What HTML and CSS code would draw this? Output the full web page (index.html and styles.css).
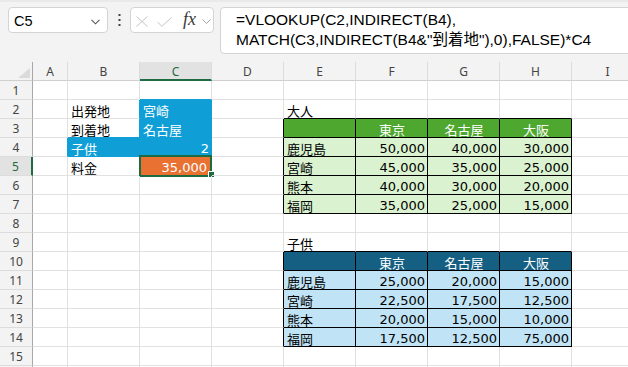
FILE: index.html
```html
<!DOCTYPE html>
<html lang="ja">

<head>
    <meta charset="UTF-8">
    <title>料金表</title>
    <link rel="stylesheet" href="styles.css">
</head>

<body>

    <div class="toolbar">
        <div class="name-box">
            <span>C5</span>
            <svg width="9" height="6" viewBox="0 0 9 6"><polyline points="0.5,0.8 4.5,4.8 8.5,0.8" fill="none" stroke="#555" stroke-width="1.1"/></svg>
        </div>
        <div class="dots">
            <svg width="3" height="13" viewBox="0 0 3 13"><rect x="0.5" y="0" width="2" height="2" fill="#444"/><rect x="0.5" y="5" width="2" height="2" fill="#444"/><rect x="0.5" y="10" width="2" height="2" fill="#444"/></svg>
        </div>
        <div class="fx-btns">
            <svg class="ico-x" width="12" height="11" viewBox="0 0 12 11"><path d="M0.5 0.5 L11.5 10.5 M11.5 0.5 L0.5 10.5" stroke="#c4c4c4" fill="none"/></svg>
            <svg class="ico-ok" width="15" height="10" viewBox="0 0 15 10"><polyline points="0.5,5 4.8,9.3 14.5,0.5" stroke="#c4c4c4" fill="none"/></svg>
            <span class="fx">fx</span>
            <svg class="ico-down" width="9" height="5" viewBox="0 0 9 5"><polyline points="0.5,0.5 4.5,4.5 8.5,0.5" stroke="#a2a2a2" fill="none"/></svg>
        </div>
        <div class="formula">=VLOOKUP(C2,INDIRECT(B4),<br>MATCH(C3,INDIRECT(B4&amp;"到着地"),0),FALSE)*C4</div>
    </div>

    <div class="sheet">
        <!-- column headers -->
        <div class="corner"><svg width="12" height="10" viewBox="0 0 12 10"><polygon points="12,0 12,10 0,10" fill="#dadada"/></svg></div>
        <div class="ch">A</div>
        <div class="ch">B</div>
        <div class="ch ch-sel">C</div>
        <div class="ch">D</div>
        <div class="ch">E</div>
        <div class="ch">F</div>
        <div class="ch">G</div>
        <div class="ch">H</div>
        <div class="ch">I</div>

        <!-- 1 -->
        <div class="rh">1</div>
        <div class="c"></div><div class="c"></div><div class="c blue-b"></div><div class="c"></div>
        <div class="c"></div><div class="c"></div><div class="c"></div><div class="c"></div><div class="c"></div>

        <!-- 2 -->
        <div class="rh">2</div>
        <div class="c"></div><div class="c blue-r">出発地</div><div class="c blue">宮崎</div><div class="c"></div>
        <div class="c black-b">大人</div><div class="c black-b"></div><div class="c black-b"></div><div class="c black-b"></div><div class="c"></div>

        <!-- 3 -->
        <div class="rh">3</div>
        <div class="c"></div><div class="c blue-r blue-b">到着地</div><div class="c blue">名古屋</div><div class="c black-r"></div>
        <div class="c g-head"></div><div class="c g-head">東京</div><div class="c g-head">名古屋</div><div class="c g-head">大阪</div><div class="c"></div>

        <!-- 4 -->
        <div class="rh">4</div>
        <div class="c blue-r"></div><div class="c blue">子供</div><div class="c blue num">2</div><div class="c black-r"></div>
        <div class="c g-body">鹿児島</div><div class="c g-body num">50,000</div><div class="c g-body num">40,000</div><div class="c g-body num">30,000</div><div class="c"></div>

        <!-- 5 -->
        <div class="rh rh-sel">5</div>
        <div class="c"></div><div class="c">料金</div>
        <div class="c orange num">35,000<span class="selection"></span><span class="handle"></span></div>
        <div class="c black-r"></div>
        <div class="c g-body">宮崎</div><div class="c g-body num">45,000</div><div class="c g-body num">35,000</div><div class="c g-body num">25,000</div><div class="c"></div>

        <!-- 6 -->
        <div class="rh">6</div>
        <div class="c"></div><div class="c"></div><div class="c"></div><div class="c black-r"></div>
        <div class="c g-body">熊本</div><div class="c g-body num">40,000</div><div class="c g-body num">30,000</div><div class="c g-body num">20,000</div><div class="c"></div>

        <!-- 7 -->
        <div class="rh">7</div>
        <div class="c"></div><div class="c"></div><div class="c"></div><div class="c black-r"></div>
        <div class="c g-body">福岡</div><div class="c g-body num">35,000</div><div class="c g-body num">25,000</div><div class="c g-body num">15,000</div><div class="c"></div>

        <!-- 8 -->
        <div class="rh">8</div>
        <div class="c"></div><div class="c"></div><div class="c"></div><div class="c"></div>
        <div class="c"></div><div class="c"></div><div class="c"></div><div class="c"></div><div class="c"></div>

        <!-- 9 -->
        <div class="rh">9</div>
        <div class="c"></div><div class="c"></div><div class="c"></div><div class="c"></div>
        <div class="c black-b">子供</div><div class="c black-b"></div><div class="c black-b"></div><div class="c black-b"></div><div class="c"></div>

        <!-- 10 -->
        <div class="rh">10</div>
        <div class="c"></div><div class="c"></div><div class="c"></div><div class="c black-r"></div>
        <div class="c b-head"></div><div class="c b-head">東京</div><div class="c b-head">名古屋</div><div class="c b-head">大阪</div><div class="c"></div>

        <!-- 11 -->
        <div class="rh">11</div>
        <div class="c"></div><div class="c"></div><div class="c"></div><div class="c black-r"></div>
        <div class="c b-body">鹿児島</div><div class="c b-body num">25,000</div><div class="c b-body num">20,000</div><div class="c b-body num">15,000</div><div class="c"></div>

        <!-- 12 -->
        <div class="rh">12</div>
        <div class="c"></div><div class="c"></div><div class="c"></div><div class="c black-r"></div>
        <div class="c b-body">宮崎</div><div class="c b-body num">22,500</div><div class="c b-body num">17,500</div><div class="c b-body num">12,500</div><div class="c"></div>

        <!-- 13 -->
        <div class="rh">13</div>
        <div class="c"></div><div class="c"></div><div class="c"></div><div class="c black-r"></div>
        <div class="c b-body">熊本</div><div class="c b-body num">20,000</div><div class="c b-body num">15,000</div><div class="c b-body num">10,000</div><div class="c"></div>

        <!-- 14 -->
        <div class="rh">14</div>
        <div class="c"></div><div class="c"></div><div class="c"></div><div class="c black-r"></div>
        <div class="c b-body">福岡</div><div class="c b-body num">17,500</div><div class="c b-body num">12,500</div><div class="c b-body num">75,000</div><div class="c"></div>

        <!-- 15 -->
        <div class="rh">15</div>
        <div class="c"></div><div class="c"></div><div class="c"></div><div class="c"></div>
        <div class="c"></div><div class="c"></div><div class="c"></div><div class="c"></div><div class="c"></div>

        <!-- 16 (only its top edge is in view) -->
        <div class="rh"></div>
        <div class="c"></div><div class="c"></div><div class="c"></div><div class="c"></div>
        <div class="c"></div><div class="c"></div><div class="c"></div><div class="c"></div><div class="c"></div>
    </div>

</body>

</html>
```

FILE: styles.css
```css
* {
    box-sizing: border-box;
}

body {
    margin: 0;
    height: 367px;
    overflow: hidden;
    background-color: #f3f3f3;
    font-family: "Liberation Sans", "Noto Sans CJK JP", sans-serif;
    color: #000;
}

/* formula bar */
.toolbar {
    display: flex;
    align-items: flex-start;
    height: 62px;
    padding: 5px 0 0 8px;
    border-top: 2px solid #e9e9e9;
}

.name-box {
    display: flex;
    align-items: center;
    justify-content: space-between;
    width: 100px;
    height: 26px;
    padding: 1px 7px 0 5px;
    background-color: #fff;
    border: 1px solid #d4d4d4;
    border-radius: 4px;
    font-size: 14.5px;
}

.name-box svg {
    margin-top: 2px;
}

.dots {
    display: flex;
    justify-content: center;
    width: 22px;
    padding-top: 7px;
}

.fx-btns {
    display: flex;
    align-items: center;
    width: 84px;
    height: 26px;
    padding-top: 3px;
    background-color: #fff;
    border: 1px solid #d4d4d4;
    border-radius: 4px;
}

.ico-x {
    margin-left: 5px;
}

.ico-ok {
    margin-left: 9px;
}

.fx {
    margin-left: 11px;
    margin-top: -4px;
    font-family: "Liberation Serif", serif;
    font-style: italic;
    font-size: 18px;
    color: #3a3a3a;
}

.ico-down {
    margin-left: 6px;
}

.formula {
    flex: 1;
    height: 47px;
    margin-left: 6px;
    margin-right: -20px;
    padding: 2px 0 0 15px;
    background-color: #fff;
    border: 1px solid #d4d4d4;
    border-radius: 4px;
    font-size: 15.5px;
    line-height: 20px;
    white-space: nowrap;
}

/* grid */
.sheet {
    display: grid;
    grid-template-columns: 33px 35px 72px 72px 72px 72px 72px 72px 72px 72px;
    grid-auto-rows: 19px;
    background-color: #fff;
}

.corner,
.ch,
.rh {
    display: flex;
    align-items: center;
    justify-content: center;
    background-color: #f3f3f3;
    font-family: "Noto Sans", sans-serif;
    font-size: 12px;
    color: #444;
}

.corner {
    align-items: flex-end;
    justify-content: flex-end;
    padding: 0 2px 2px 0;
    border-right: 1px solid #a8a8a8;
    border-bottom: 1px solid #cfcfcf;
}

.ch {
    border-right: 1px solid #dcdcdc;
    border-bottom: 1px solid #cfcfcf;
    padding-top: 1px;
}

.ch-sel {
    background-color: #e2e2e2;
    color: #1d6b40;
    border-bottom: 2px solid #1d6b40;
}

.rh {
    border-right: 1px solid #a8a8a8;
    border-bottom: 1px solid #dcdcdc;
}

.rh-sel {
    background-color: #e2e2e2;
    color: #1d6b40;
    border-right: 2px solid #1d6b40;
}

.c {
    position: relative;
    display: flex;
    align-items: center;
    padding: 2px 2px 0 3px;
    border-right: 1px solid #e1e1e1;
    border-bottom: 1px solid #e1e1e1;
    font-family: "DejaVu Sans", "Noto Sans CJK JP", sans-serif;
    font-size: 13px;
    white-space: nowrap;
}

.num {
    justify-content: flex-end;
}

.blue {
    background-color: #0f9ed5;
    border-color: #0f9ed5;
    color: #fff;
}

.blue-r {
    border-right-color: #0f9ed5;
}

.blue-b {
    border-bottom-color: #0f9ed5;
}

.orange {
    background-color: #e97132;
    color: #fff;
    padding-right: 4px;
}

.selection {
    position: absolute;
    left: -1px;
    top: -2px;
    width: 73px;
    height: 22px;
    border: 2px solid #1d6b40;
}

.handle {
    position: absolute;
    left: 68px;
    top: 14px;
    width: 7px;
    height: 7px;
    background-color: #1d6b40;
    border: 1px solid #fff;
}

.black-r {
    border-right-color: #000;
}

.black-b {
    border-bottom-color: #000;
}

.g-head,
.g-body,
.b-head,
.b-body {
    border-right-color: #000;
    border-bottom-color: #000;
}

.g-head {
    justify-content: center;
    background-color: #4ea72e;
    color: #fff;
}

.g-body {
    background-color: #daf2d0;
}

.b-head {
    justify-content: center;
    background-color: #156082;
    color: #fff;
}

.b-body {
    background-color: #c0e4f5;
}
```
